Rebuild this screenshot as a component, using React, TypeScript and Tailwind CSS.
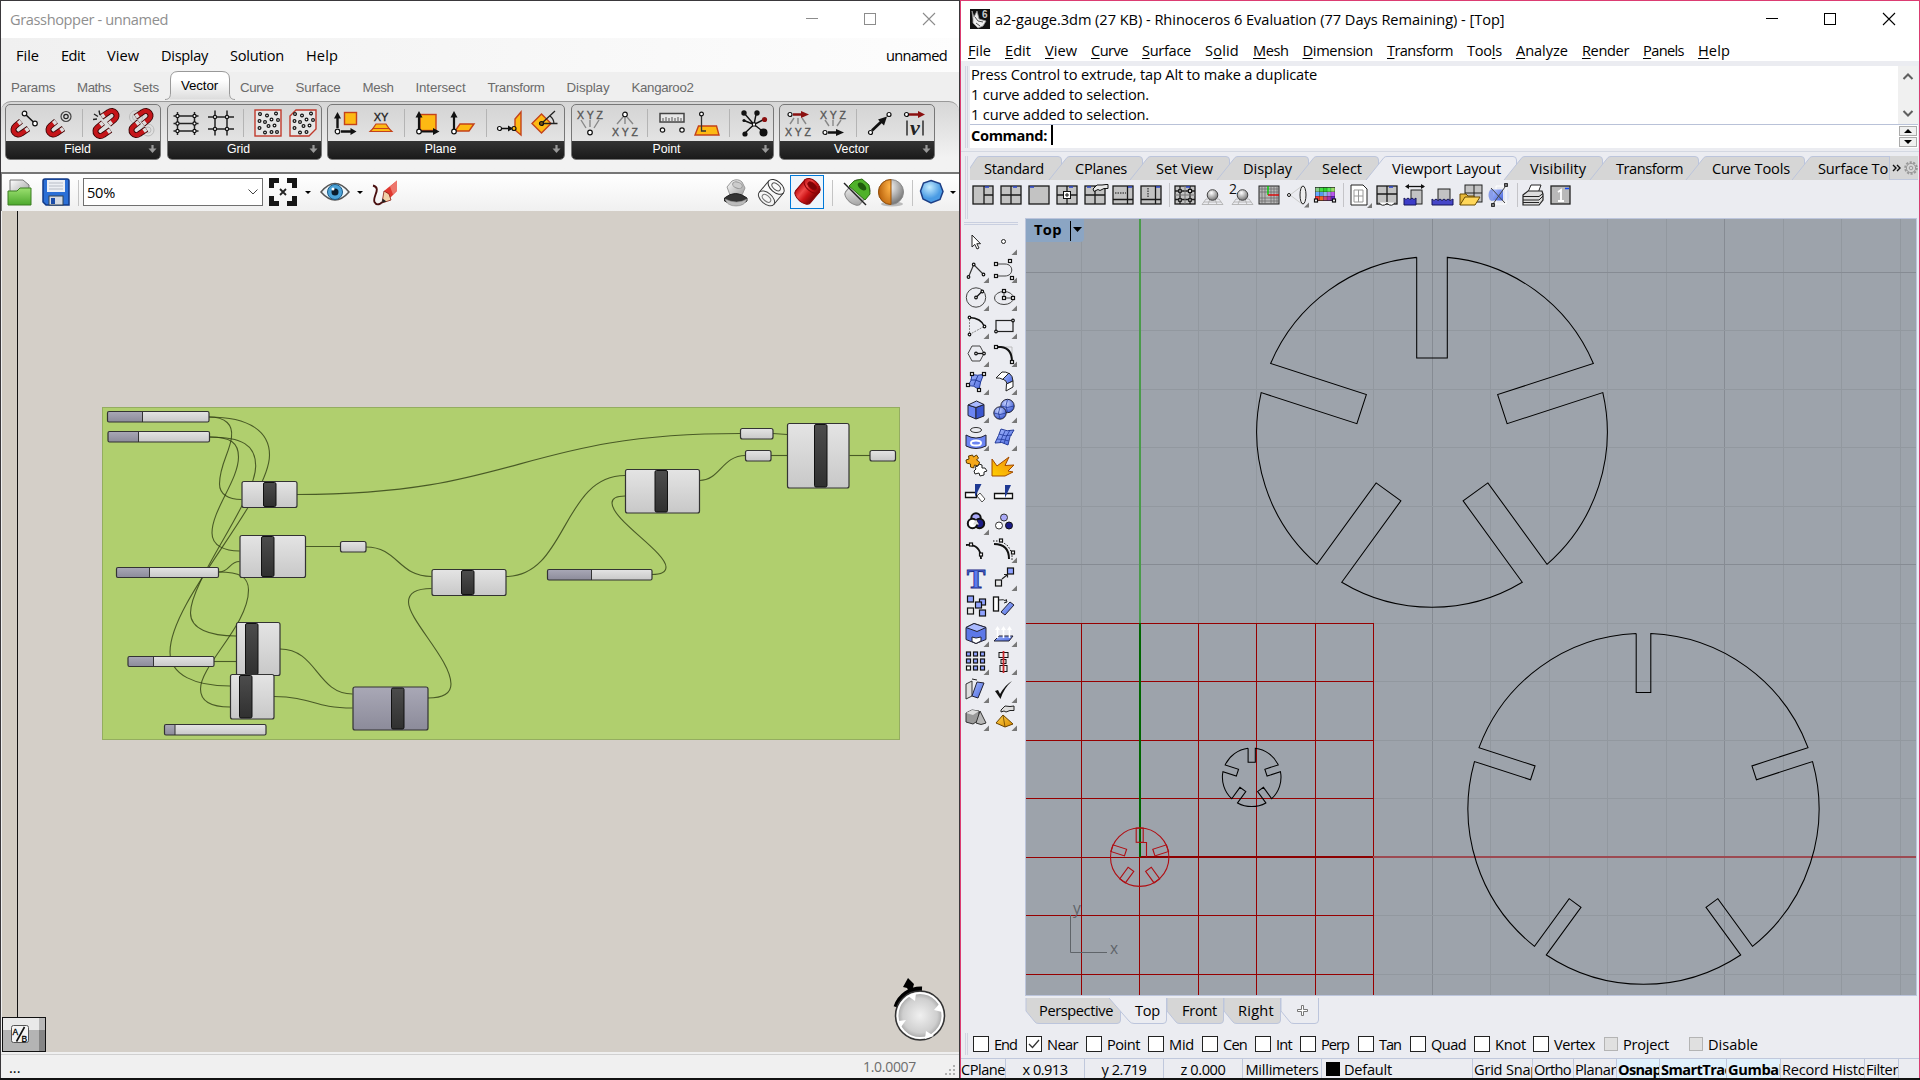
import React, { useLayoutEffect, useRef, useState } from "react";

/* Text run whose tracking is tuned so that it fills a given width. */
function T({ w, className = "", children }: { w?: number; className?: string; children: React.ReactNode }) {
  const ref = useRef<HTMLSpanElement>(null);
  const [ls, setLs] = useState(0);
  useLayoutEffect(() => {
    if (!w || !ref.current) return;
    const n = (ref.current.textContent || "").length;
    setLs((w - ref.current.getBoundingClientRect().width) / n);
  }, []);
  return (
    <span ref={ref} className={"inline-block whitespace-pre " + className} style={{ letterSpacing: ls }}>
      {children}
    </span>
  );
}

function Svg({ w, h, className = "", children }: { w: number; h: number; className?: string; children: React.ReactNode }) {
  return (
    <svg width={w} height={h} viewBox={`0 0 ${w} ${h}`} fill="none" className={"block shrink-0 overflow-visible " + className}>
      {children}
    </svg>
  );
}

const Defs = () => (
  <svg width="0" height="0" className="absolute">
    <defs>
      <linearGradient id="node" x1="0" y1="0" x2="0" y2="1"><stop offset="0" stopColor="#e4e4e4" /><stop offset="1" stopColor="#c8c8c8" /></linearGradient>
      <linearGradient id="bar" x1="0" y1="0" x2="0" y2="1"><stop offset="0" stopColor="#4c4c4c" /><stop offset="1" stopColor="#303030" /></linearGradient>
      <linearGradient id="sel" x1="0" y1="0" x2="0" y2="1"><stop offset="0" stopColor="#a9a8b6" /><stop offset="1" stopColor="#8c8b9a" /></linearGradient>
      <linearGradient id="red" x1="0" y1="0" x2="1" y2="0"><stop offset="0" stopColor="#c01214" /><stop offset=".3" stopColor="#f04a48" /><stop offset=".6" stopColor="#cc1416" /><stop offset="1" stopColor="#7c0406" /></linearGradient>
      <linearGradient id="blue" x1="0" y1="0" x2="1" y2="1"><stop offset="0" stopColor="#a9bcff" /><stop offset="1" stopColor="#4564dc" /></linearGradient>
      <linearGradient id="green" x1="0" y1="0" x2="0" y2="1"><stop offset="0" stopColor="#9be070" /><stop offset="1" stopColor="#4ca82c" /></linearGradient>
      <linearGradient id="gray" x1="0" y1="0" x2="1" y2="1"><stop offset="0" stopColor="#ffffff" /><stop offset="1" stopColor="#9a9a9a" /></linearGradient>
      <linearGradient id="gold" x1="0" y1="0" x2="1" y2="1"><stop offset="0" stopColor="#ffd24a" /><stop offset="1" stopColor="#d98a00" /></linearGradient>
      <linearGradient id="orange" x1="1" y1="0" x2="0" y2="1"><stop offset="0" stopColor="#f08a10" /><stop offset="1" stopColor="#ffd000" /></linearGradient>
      <radialGradient id="ball" cx=".4" cy=".3" r=".7"><stop offset="0" stopColor="#fff" /><stop offset="1" stopColor="#777" /></radialGradient>
      <radialGradient id="obail" cx=".9" cy=".3" r="1"><stop offset="0" stopColor="#ffb347" /><stop offset="1" stopColor="#b35a06" /></radialGradient>
      <radialGradient id="bball" cx=".4" cy=".3" r=".7"><stop offset="0" stopColor="#c9d5ff" /><stop offset="1" stopColor="#3c5ad2" /></radialGradient>
      <radialGradient id="dial"><stop offset="0" stopColor="#f0f0f0" /><stop offset=".7" stopColor="#cfcfcf" /><stop offset="1" stopColor="#9a9a9a" /></radialGradient>
      <radialGradient id="hex" cx=".4" cy=".3"><stop offset="0" stopColor="#c4ecff" /><stop offset="1" stopColor="#4a9be4" /></radialGradient>
    </defs>
  </svg>
);

/* ---------- Grasshopper ribbon icons (28 x 28) ---------- */

const Magnet = ({ t = "" }: { t?: string }) => (
  <g transform={t} strokeLinecap="butt">
    <path d="M12 10.300L6.300 15a4.800 4.800 0 0 0 6 7.500L19.500 17.500" stroke="#3a0808" strokeWidth="6" />
    <path d="M11.600 10.700L6.300 15a4.800 4.800 0 0 0 6 7.500L19 17.900" stroke="#c5161a" strokeWidth="4.200" />
    <path d="M11.900 10.400l-2.600 2.200M19.300 17.700l-2.700 2" stroke="#dcdcdc" strokeWidth="4" />
  </g>
);
const O = ({ x, y, r = 1.9, f = "#fff" }: { x: number; y: number; r?: number; f?: string }) => (
  <circle cx={x} cy={y} r={r} fill={f} stroke="#111" strokeWidth="1.2" />
);
const Letters = ({ x, y, c = "#555", s = 10.5, children }: { x: number; y: number; c?: string; s?: number; children: string }) => (
  <text x={x} y={y} fontSize={s} fontFamily="Liberation Sans, sans-serif" fill={c} stroke={c} strokeWidth=".35" textAnchor="middle">{children}</text>
);
const dots = [[6, 5], [13, 6.5], [22, 4.500], [17.500, 10.500], [24, 11], [5.500, 12], [11, 13], [20.500, 16.500], [14.500, 17], [5.500, 19], [23, 23], [11, 23.500], [17.500, 23]];

const gh: Record<string, React.ReactNode> = {
  m1: <><Magnet t="translate(-1 2)" /><path d="M14.500 4.500l10.500 10" stroke="#111" strokeWidth="1.500" /><O x={14.500} y={4.500} r={2.300} /><O x={25} y={14.500} r={2.300} /></>,
  m2: <><Magnet t="translate(-1 2)" /><circle cx="21" cy="7.500" r="5" stroke="#444" strokeWidth="1.200" /><circle cx="21" cy="7.500" r="2.200" stroke="#222" strokeWidth="1.200" /></>,
  m3: <><Magnet t="translate(-1 3.500)" /><Magnet t="rotate(180 14 14) translate(-1 2.500)" /><path d="M2 5l4 2.500M7 1.500l1 4.500M1 10.500l4-.5" stroke="#222" strokeWidth="1.400" /></>,
  m4: <><circle cx="9" cy="8" r="6.500" stroke="#bbb" /><circle cx="9" cy="8" r="3.500" stroke="#bbb" /><circle cx="21" cy="21" r="6" stroke="#bbb" /><circle cx="21" cy="21" r="3" stroke="#bbb" /><Magnet t="translate(0 2.500)" /><Magnet t="rotate(180 14 14) translate(0 2.500)" /></>,
  g1: <><path d="M1.500 7h25M1.500 14.500h25M1.500 22h25M5.500 3v23M22.500 3v23" stroke="#222" strokeWidth="1.500" />{[7, 14.500, 22].map((y) => <g key={y}><O x={5.500} y={y} r={1.600} /><O x={22.500} y={y} r={1.600} /></g>)}</>,
  g2: <><path d="M1 8h26M1 20h26M8 1.500v25M20 1.500v25" stroke="#222" strokeWidth="1.500" /><O x={8} y={8} r={1.600} /><O x={20} y={8} r={1.600} /><O x={8} y={20} r={1.600} /><O x={20} y={20} r={1.600} /></>,
  g3: <><rect x="1" y="1" width="26" height="26" fill="#e6e6e6" stroke="#c0392b" strokeWidth="1.400" />{dots.map(([x, y]) => <O key={x + "," + y} x={x} y={y} r={1.400} />)}</>,
  g4: <><path d="M7 1h20v19l-7 7H1V7z" fill="#e6e6e6" stroke="#c0392b" strokeWidth="1.400" />{dots.filter((d) => d[0] + d[1] < 46).map(([x, y]) => <O key={x + "," + y} x={x} y={y} r={1.400} />)}</>,
  p1: <><rect x="12.500" y="3.500" width="12" height="12" fill="#fdb913" stroke="#c4421a" strokeWidth="1.400" /><path d="M5.500 19V8M9 22.500h10" stroke="#111" strokeWidth="2.400" /><path d="M5.500 3l3.500 6.500h-7zM24.500 22.500l-6 3.500v-7z" fill="#111" /><O x={5.500} y={22.500} r={2.300} /></>,
  p2: <><Letters x={14} y={12} c="#222" s={11}>XY</Letters><path d="M9 15h10l3 4.500H6z" fill="#fdb913" stroke="#c4421a" strokeWidth="1.200" /><path d="M6 19.500h16l3 3H3z" fill="#fdb913" stroke="#c4421a" strokeWidth="1.200" /></>,
  p3: <><rect x="6" y="5.500" width="16" height="16" fill="#fdb913" stroke="#c4421a" strokeWidth="1.400" /><path d="M5 21V8M6 22.500h14" stroke="#111" strokeWidth="2.200" /><path d="M5 2l3.500 6.500h-7zM25.500 22.500l-6.500 3.500v-7z" fill="#111" /><O x={5} y={22.500} r={2.300} /></>,
  p4: <><path d="M11 15h14l-5 7H6z" fill="#fdb913" stroke="#c4421a" strokeWidth="1.400" /><path d="M5 21V8" stroke="#111" strokeWidth="2.200" /><path d="M5 2l3.500 6.500h-7z" fill="#111" /><O x={5} y={22.500} r={2.300} /></>,
  p5: <><path d="M19 10l6-7v23l-6-5z" fill="#fdb913" stroke="#c4421a" strokeWidth="1.400" /><path d="M5 19.500h8" stroke="#111" strokeWidth="1.600" /><path d="M17 19.500l-5 3v-6z" fill="#111" /><O x={3.500} y={19.500} r={2} /><O x={18} y={19.500} r={2} f="#fdb913" /></>,
  p6: <><path d="M10.500 5l9.500 9.500-9.500 9.500L1 14.500z" fill="#fdb913" stroke="#c4421a" strokeWidth="1.400" /><path d="M10.500 14.500L24 2M10.500 14.500h16M19 7q4 3 4 8" stroke="#222" strokeWidth="1.300" /><O x={10.500} y={14.500} r={2} f="#7a5510" /></>,
  q1: <><Letters x={14} y={9.500}>X Y Z</Letters><path d="M5 11l5 8M14 11v7M23 11l-5 8" stroke="#888" strokeWidth="1.400" /><O x={14} y={23.500} r={2.300} /></>,
  q2: <><O x={14} y={5.500} r={2.300} /><path d="M12 8l-6 7M14 9v6M16 8l6 7" stroke="#888" strokeWidth="1.400" /><Letters x={14} y={26.500}>X Y Z</Letters></>,
  q3: <><rect x="2" y="4.500" width="24" height="8.500" fill="#e8e8e8" stroke="#444" strokeWidth="1.500" /><path d="M5 12V9M8 12V8M11 12V9M14 12V8M17 12V9M20 12V8M23 12V9" stroke="#555" /><O x={4.500} y={21} r={2.200} /><O x={24} y={21} r={2.200} /></>,
  q4: <><path d="M5.500 17h18l2.500 9H2z" fill="#fdb913" stroke="#c4421a" strokeWidth="1.400" /><path d="M8.500 6v16h4.500" stroke="#333" strokeWidth="1.300" /><O x={8.500} y={5} r={1.900} /></>,
  q5: <><path d="M14 15.500L4 4M14 15.500L16.500 3M14 15.500L4 11.500M14 15.500l10-5M14 15.500L5 24M14 15.500l9 7" stroke="#111" strokeWidth="1.400" /><circle cx="4" cy="4" r="2.700" fill="#111" /><circle cx="17" cy="4" r="2.700" fill="#111" /><circle cx="4" cy="11.500" r="1.600" fill="#111" /><circle cx="24.500" cy="10.500" r="2.600" fill="#8b1010" /><circle cx="5" cy="25" r="2.600" fill="#111" /><circle cx="23.500" cy="23.500" r="4" fill="#111" /><rect x="12.500" y="14" width="3" height="3" fill="#fff" stroke="#111" /></>,
  v1: <><path d="M9 5.500h9" stroke="#8b1010" strokeWidth="2.600" /><path d="M25 5.500l-8 3.500V2z" fill="#8b1010" /><O x={6} y={5.500} r={2} /><path d="M10 9l-4 6M14 9v6M18 9l4 6" stroke="#888" strokeWidth="1.400" /><Letters x={14} y={26.500}>X Y Z</Letters></>,
  v2: <><Letters x={14} y={9.500}>X Y Z</Letters><path d="M6 11l4 6M14 11v6M22 11l-4 6" stroke="#888" strokeWidth="1.400" /><path d="M9 23.500h9" stroke="#111" strokeWidth="2.600" /><path d="M25 23.500l-8 3.500v-7z" fill="#111" /><O x={6} y={23.500} r={2} /></>,
  v3: <><path d="M6 21.500L16 12" stroke="#111" strokeWidth="2.800" /><path d="M21 7.500l-3 9-6-6z" fill="#111" /><O x={4.500} y={23.500} r={2} /><O x={23} y={5.500} r={2} /></>,
  v4: <><path d="M8 5.500h9" stroke="#8b1010" strokeWidth="2.600" /><path d="M24 5.500l-7 3.500V2z" fill="#8b1010" /><O x={5.500} y={5.500} r={2} /><path d="M6 11.500v15M22 11.500v15" stroke="#222" strokeWidth="1.400" /><text x="14" y="25.500" fontSize="22" fontWeight="bold" fontStyle="italic" textAnchor="middle" fontFamily="Liberation Serif, serif" fill="#222">v</text></>,
};

const ribbon: { name: string; w: string; icons: string[] }[] = [
  { name: "Field", w: "w-[156px]", icons: ["m1", "m2", "|", "m3", "m4"] },
  { name: "Grid", w: "w-[155px]", icons: ["g1", "g2", "|", "g3", "g4"] },
  { name: "Plane", w: "w-[238px]", icons: ["p1", "p2", "|", "p3", "p4", "|", "p5", "p6"] },
  { name: "Point", w: "w-[203px]", icons: ["q1", "q2", "|", "q3", "q4", "|", "q5"] },
  { name: "Vector", w: "w-[156px]", icons: ["v1", "v2", "|", "v3", "v4"] },
];

const ghMenu: [string, number][] = [["File", 23], ["Edit", 24], ["View", 32], ["Display", 47], ["Solution", 54], ["Help", 32]];
const ghTabs: [string, number][] = [["Params", 44], ["Maths", 34], ["Sets", 26], ["Vector", 37], ["Curve", 33.5], ["Surface", 45], ["Mesh", 31], ["Intersect", 50], ["Transform", 57], ["Display", 43], ["Kangaroo2", 62]];

const WinButtons = ({ color }: { color: string }) => (
  <div className="flex items-center">
    <Svg w={12} h={12}><path d="M0 5.500h12" stroke={color} /></Svg>
    <Svg w={12} h={12} className="ml-[46px]"><rect x=".5" y=".5" width="11" height="11" stroke={color} /></Svg>
    <Svg w={12} h={12} className="ml-[47px]"><path d="M0 0l12 12M12 0L0 12" stroke={color} strokeWidth="1.100" /></Svg>
  </div>
);

const Tri = ({ className = "" }: { className?: string }) => <Svg w={6} h={3} className={className}><path d="M0 0h6L3 3z" fill="#000" /></Svg>;

/* ---------- Grasshopper canvas data ---------- */

const sliders = [
  [107.500, 411.500, 101.500, 10.500, 142.500], [108, 431.500, 101.500, 10.500, 138.500], [116.500, 567.500, 102, 10, 149.500],
  [128, 656.500, 86, 10, 153.500], [164.500, 724.500, 101.500, 10.500, 175], [547.500, 569.500, 104.500, 10.500, 591.500],
];
const nodes: { r: number[]; bar?: number; sel?: boolean }[] = [
  { r: [242, 481.500, 55, 26], bar: 263.500 }, { r: [240, 535.500, 65.500, 42], bar: 261.500 }, { r: [340.500, 541.500, 25.500, 10.500] },
  { r: [432, 569.500, 74, 26], bar: 461.500 }, { r: [236.500, 622.500, 43.500, 53], bar: 245.500 }, { r: [230.500, 674.500, 43.500, 44.500], bar: 239.500 },
  { r: [353, 687, 75, 43], bar: 391.500, sel: true }, { r: [625.500, 469.500, 74, 43.500], bar: 655 }, { r: [787.500, 423.500, 61.500, 64.500], bar: 814.500 },
  { r: [740.500, 428.500, 32.500, 10.500] }, { r: [745.500, 450.500, 25.500, 10.500] }, { r: [870, 450.500, 25.500, 10.500] },
];
const wires = [
  "M209 417C226 417 233 425 231.500 437C230 452 219.500 465 219.500 484C219.500 494 228 499.500 241.500 499.500",
  "M209 417C250 417 269.500 432 269.500 455C269.500 500 170 600 170 652C170 675 195 686 230 686",
  "M209.500 437C242 437 255.700 445 255.700 466C255.700 500 190.500 580 190.500 613C190.500 629 210 636 236 636",
  "M209.500 437C231 437 238.500 443 238.500 457C238.500 480 212 510 212 533C212 546 225 551 239.500 551",
  "M218.500 572C230 572 229 561.500 239.500 561.500",
  "M218.500 572C240 572 248.500 577 248.500 590C248.500 625 200.500 665 200.500 689C200.500 702 212 707 230 707",
  "M214 661.500H236", "M297 494.500C520 494.500 520 433.500 740 433.500", "M773 433.500L787 434.500", "M771 455.500H787", "M849.500 455.500H870",
  "M699.500 480.500C720 480.500 722 455.500 745.500 455.500", "M506 576.500C567 576.500 562 475.500 625 475.500",
  "M652 574.500C662 574.500 666 572 666 567C666 552 612 520 612 503C612 498 617 496 625 496",
  "M305.500 546.500H340", "M366 547C398 547 398 576.500 431.500 576.500", "M280 649C317 649 317 694 352.500 694", "M274 696.500C313 697 313 708 352.500 708",
  "M428 698C443 698 451 694 451 684C451 660 408.500 620 408.500 602C408.500 593 417 588.500 431.500 588.500",
];

function GhCanvas() {
  return (
    <svg width="957" height="841" viewBox="2 211 957 841" fill="none" className="block">
      <rect x="2" y="211" width="15" height="841" fill="#d2ccc2" />
      <path d="M17.500 211V1017" stroke="#111" />
      <rect x="102.500" y="407.500" width="797" height="332" fill="#b0cf6e" stroke="#94ad60" />
      {wires.map((d) => <path key={d} d={d} stroke="#2f3d14" strokeOpacity=".8" strokeWidth="1.100" />)}
      {sliders.map(([x, y, w, h, s]) => (
        <g key={x}>
          <rect x={x} y={y} width={w} height={h} rx="1.500" fill="url(#node)" />
          <rect x={x} y={y} width={s - x} height={h} fill="url(#sel)" />
          <path d={`M${s} ${y}v${h}`} stroke="#333" />
          <rect x={x} y={y} width={w} height={h} rx="1.500" stroke="#333" strokeWidth="1.200" />
        </g>
      ))}
      {nodes.map(({ r: [x, y, w, h], bar, sel }) => (
        <g key={x + "," + y}>
          <rect x={x} y={y} width={w} height={h} rx="2" fill={sel ? "url(#sel)" : "url(#node)"} stroke="#333" strokeWidth="1.200" />
          {bar && <rect x={bar} y={y + 1} width="12.500" height={h - 2} rx="1.500" fill="url(#bar)" stroke="#111" />}
        </g>
      ))}
      <g>
        <rect x="2" y="1017" width="44" height="35" fill="#111" />
        <rect x="3" y="1018" width="36" height="12" fill="#e9e9e9" /><rect x="3" y="1030" width="36" height="21" fill="#b4b4b4" />
        <rect x="39" y="1018" width="6" height="12" fill="#b8b8b8" /><rect x="39" y="1030" width="6" height="21" fill="#858585" />
        <rect x="11.500" y="1025.500" width="17" height="17" rx="2" fill="#f4f4f4" stroke="#555" />
        <path d="M24.500 1027l-8 14.500" stroke="#111" strokeWidth="1.600" />
        <text x="12.500" y="1034.500" fontSize="8.500" fontFamily="Liberation Sans, sans-serif" fill="#000" stroke="#000" strokeWidth=".3">A</text>
        <text x="21.500" y="1041.500" fontSize="8.500" fontFamily="Liberation Sans, sans-serif" fill="#000" stroke="#000" strokeWidth=".3">B</text>
      </g>
      <g>
        <path d="M896 1007A26 26 0 0 1 922 989" stroke="#000" strokeWidth="5" />
        <path d="M908 978l6 6-2 7 3 0-4 4-4-7-4-1z" fill="#000" />
        <circle cx="920" cy="1015.500" r="24.500" fill="url(#dial)" stroke="#333" strokeWidth="1.500" />
        <circle cx="920" cy="1015.500" r="22.500" stroke="#fff" strokeWidth="2" />
        <path d="M908 996l8-3-1 8zM940 1003l2 9-8-2zM899 1021l7-1-5 7zM926 1031l8 5-9 3z" fill="#fff" />
      </g>
    </svg>
  );
}

const Cyl = ({ body, dark, stroke = "#555" }: { body: string; dark: string; stroke?: string }) => (
  <g transform="rotate(40 14 14)">
    <path d="M4.500 6v14.500a9.500 5 0 0 0 19 0V6z" fill={body} stroke={stroke} />
    <ellipse cx="14" cy="6" rx="9.500" ry="5.500" fill={body} stroke={stroke} />
    <ellipse cx="14" cy="6" rx="5" ry="2.700" fill={dark} stroke={stroke} />
  </g>
);

function Grasshopper() {
  return (
    <div className="flex h-[1078px] w-[960px] flex-col border-r border-l border-t border-[#3a383b] bg-[#efefef]">
      <div className="flex h-[37px] shrink-0 items-center justify-between bg-white pb-[1px] pl-[9px] pr-[24px]">
        <T w={158} className="text-[14.600px] text-[#8f8f8f]">Grasshopper - unnamed</T>
        <WinButtons color="#8c8c8c" />
      </div>
      <div className="flex h-[34px] shrink-0 items-center justify-between bg-gradient-to-r from-[#f0f0f0] to-[#fdfdfd] pl-[15px] pr-[12px]">
        <div className="flex gap-[22px]">{ghMenu.map(([t, w]) => <T key={t} w={w} className="text-[14.600px] text-black">{t}</T>)}</div>
        <T w={61} className="text-[14.600px]">unnamed</T>
      </div>
      <div className="relative z-10 flex h-[29px] shrink-0 items-center gap-[22px] pl-[10px] pt-[2px] font-['Liberation_Sans',Arial,sans-serif] text-[13.300px] text-[#6b6b6b]">
        {ghTabs.map(([t, w]) =>
          t === "Vector" ? (
            <div key={t} className="relative -mt-1 text-black">
              <svg width="70" height="30" viewBox="0 0 70 30" className="absolute -left-[16px] -top-[5px]">
                <defs><linearGradient id="tb" x1="0" y1="0" x2="0" y2="1"><stop offset=".3" stopColor="#fff" /><stop offset="1" stopColor="#dcdcdc" /></linearGradient></defs>
                <path d="M0 28.500C4 28.500 5.500 26 5.500 22V8Q5.500 .5 13 .5H57Q64.500 .5 64.500 8V22C64.500 26 66 28.500 70 28.500" fill="url(#tb)" stroke="#999" />
              </svg>
              <T w={w} className="relative">{t}</T>
            </div>
          ) : <T key={t} w={w}>{t}</T>,
        )}
      </div>
      <div className="flex h-[71px] shrink-0 gap-[5.500px] rounded-t-[10px] border-t border-[#999] bg-gradient-to-b from-[#d6d6d6] to-[#f2f2f2] to-80% pl-1 pt-[2px]">
        {ribbon.map((g) => (
          <div key={g.name} className={"flex h-[56px] flex-col overflow-hidden rounded-[5px] border border-[#777] bg-gradient-to-b from-[#d4d4d4] to-[#ebebeb] " + g.w}>
            <div className="flex h-[37px] items-center">
              {g.icons.map((k, i) =>
                k === "|" ? <div key={i} className="flex w-[12px] justify-center"><div className="h-[28px] w-px bg-[#b4b4b4]" /></div>
                  : <div key={i} className="flex w-[35px] justify-center pl-[1px]"><Svg w={28} h={28}>{gh[k]}</Svg></div>,
              )}
            </div>
            <div className="relative flex h-[18px] items-center justify-center bg-gradient-to-b from-[#343434] to-[#1a1a1a] pb-[2px] pr-[11px] font-['Liberation_Sans',Arial,sans-serif] text-[12.300px] text-white">
              {g.name}
              <Svg w={9} h={9} className="absolute right-[3px] top-[4px]"><path d="M4.500 0v4" stroke="#999" strokeWidth="2.200" /><path d="M.5 3.500h8l-4 4.500z" fill="#999" /></Svg>
            </div>
          </div>
        ))}
      </div>
      <div className="flex h-[39px] shrink-0 items-center border-l border-t-2 border-[#777] bg-gradient-to-b from-white to-[#f0f0f0] pl-[5px]">
        <Svg w={26} h={28} className="-mt-[2px]">
          <path d="M3 2h13l6 5v12H3z" fill="url(#gray)" stroke="#777" />
          <path d="M1 13h9l3-3h11v17H1z" fill="url(#green)" stroke="#3a7d20" />
        </Svg>
        <Svg w={28} h={28} className="-mt-[2px] ml-[9px]">
          <path d="M1 3q0-2 2-2h22q2 0 2 2v24H4l-3-3z" fill="#2b6fd6" stroke="#123a86" strokeWidth="1.500" />
          <rect x="5" y="2" width="18" height="12" fill="#eceff4" /><path d="M7 5h14M7 8h14M7 11h14" stroke="#b8bdc6" />
          <rect x="7" y="18" width="14" height="9" fill="#d5dae2" stroke="#345" /><rect x="9" y="20" width="4" height="6" fill="#1a4ca8" />
        </Svg>
        <div className="ml-[8px] h-[26px] w-px bg-[#c4c4c4]" />
        <div className="-mt-[2px] ml-[4px] flex h-[28px] w-[180px] items-center justify-between border border-[#707070] bg-white pl-[3px] pr-[4px]">
          <T w={28} className="text-[14.600px] text-black">50%</T>
          <Svg w={10} h={6}><path d="M.5 .5l4.500 4.500L9.500 .5" stroke="#444" /></Svg>
        </div>
        <Svg w={28} h={28} className="-mt-[2px] ml-[6px]">
          <path d="M2.500 10V2.500H10M18 2.500h7.500V10M2.500 18v7.500H10M18 25.500h7.500V18" stroke="#161616" strokeWidth="5" />
          <path d="M11 11l6 6M17 11l-6 6" stroke="#222" strokeWidth="1.800" />
        </Svg>
        <Tri className="-mt-[1px] ml-[8px]" />
        <Svg w={28} h={20} className="-mt-[2px] ml-[10px]">
          <path d="M0 10Q14-7 28 10Q14 26 0 10z" fill="#eef6fa" stroke="#555" strokeWidth="1.500" /><circle cx="14" cy="10" r="7.500" fill="#4ba3d9" stroke="#1d5a86" /><circle cx="14" cy="10" r="3.500" fill="#0a1c2c" /><circle cx="12" cy="7" r="1.500" fill="#fff" />
        </Svg>
        <Tri className="-mt-[1px] ml-[8px]" />
        <Svg w={28} h={28} className="ml-[9px]">
          <path d="M25 1.500L12 12l5 8 8-8z" fill="#e0382f" /><path d="M25 1.500l0 10-4 4-3-8z" fill="#f0867c" opacity=".8" /><path d="M12 12l-2 12 9-3-2-6z" fill="#f2d2a8" stroke="#8a1a10" strokeWidth=".8" /><path d="M10.500 19.500l-.5 4.500 4.500-1.500z" fill="#222" />
          <path d="M1 6.500C10 9 0 18 2.500 23C5 27.500 9 24.500 10 23" stroke="#4a1010" strokeWidth="1.900" />
        </Svg>
        <Svg w={28} h={28} className="ml-[322px]">
          <g transform="translate(0 -1)"><path d="M5 9l5-6q6-3 10 1l3 6-3 7q-6 4-12 0z" fill="url(#gray)" stroke="#999" /><ellipse cx="15.500" cy="7" rx="5" ry="3" fill="#ccc" stroke="#999" transform="rotate(20 15 7)" /><path d="M2.500 20q11-9 22.500 0v3q-10 8-22.500 0z" fill="#333" stroke="#222" /><path d="M3 21q2 7 11 7t11-7q-10 6-22 0z" fill="#bbb" stroke="#888" strokeWidth=".6" /></g>
        </Svg>
        <Svg w={28} h={28} className="ml-[7px]"><g transform="rotate(40 14 14)"><path d="M4.500 6v15M23.500 6v15" stroke="#333" /><ellipse cx="14" cy="6" rx="9.500" ry="5.500" stroke="#333" /><ellipse cx="14" cy="6" rx="5" ry="2.800" stroke="#555" /><ellipse cx="14" cy="21" rx="9.500" ry="5.500" stroke="#444" /><ellipse cx="14" cy="21" rx="5" ry="2.800" stroke="#777" /></g></Svg>
        <div className="-mt-[1px] ml-[5px] flex h-[34px] w-[34px] items-center justify-center border border-[#0078d7] bg-[#eef5fb]"><Svg w={28} h={28}><Cyl body="url(#red)" dark="#7c0506" stroke="#8c0406" /></Svg></div>
        <div className="ml-[8px] h-[26px] w-px bg-[#c4c4c4]" />
        <Svg w={28} h={28} className="ml-[10px]"><Cyl body="url(#gray)" dark="#999" stroke="#888" /><path d="M6 7l5-5 8-2 7 6 1 9-5 6z" fill="#4fb22a" stroke="#2c7010" /><ellipse cx="19" cy="7.500" rx="5" ry="3" fill="#1f5a0c" transform="rotate(40 19 7.500)" /><path d="M1 4l22 22" stroke="#222" strokeWidth="1.500" /></Svg>
        <Svg w={28} h={28} className="ml-[6px]"><ellipse cx="15" cy="25" rx="11" ry="2.500" fill="#bbb" /><circle cx="14" cy="13" r="12.500" fill="url(#ball)" stroke="#888" /><path d="M14 .5a12.500 12.500 0 0 0 0 25z" fill="url(#obail)" stroke="#9a5208" /></Svg>
        <div className="ml-[7px] h-[26px] w-px bg-[#c4c4c4]" />
        <Svg w={26} h={26} className="-mt-[1px] ml-[6px]"><path d="M12 1.500l9 3 3 8-3 8-9 3.500-8-4-2.500-8L4.500 4z" fill="url(#hex)" stroke="#1d3f86" strokeWidth="1.500" /></Svg>
        <Tri className="-mt-[1px] ml-[5px]" />
      </div>
      <div className="ml-px h-[841px] shrink-0 bg-[#d4cfc8]"><GhCanvas /></div>
      <div className="mt-[2px] flex min-h-0 flex-1 items-center justify-between border-t border-[#d0d0d0] bg-[#f0f0f0] pl-[8px] pr-[3px]">
        <span className="text-[14.600px] text-black">...</span>
        <div className="flex items-end">
          <T w={53} className="text-[14px] text-[#6d6d6d]">1.0.0007</T>
          <Svg w={12} h={12} className="ml-[28px]"><path d="M9 1h2M9 5h2M5 5h2M9 9h2M5 9h2M1 9h2" stroke="#b0b0b0" strokeWidth="2" /></Svg>
        </div>
      </div>
    </div>
  );
}

/* ---------- Rhino ---------- */

const rhMenu: [string, number, number][] = [
  ["File", 0, 23], ["Edit", 0, 26], ["View", 0, 32], ["Curve", 0, 37], ["Surface", 0, 49], ["Solid", 1, 34], ["Mesh", 0, 35.500], ["Dimension", 0, 70.500],
  ["Transform", 0, 66], ["Tools", 3, 35], ["Analyze", 0, 52], ["Render", 0, 47], ["Panels", 0, 41], ["Help", 0, 32],
];
const rhTabs: [string, number, number][] = [
  ["Standard", 92, 60], ["CPlanes", 95, 52], ["Set View", 101, 57], ["Display", 93, 49], ["Select", 84, 40], ["Viewport Layout", 152, 109],
  ["Visibility", 100, 56], ["Transform", 110, 67], ["Curve Tools", 120, 78], ["Surface To", 98, 70],
];

const VP = ({ d = "", m = 11 }: { d?: string; m?: number }) => (
  <><rect x="1" y="2" width="20" height="18" fill="#c3c3c3" stroke="#1a1a1a" strokeWidth="1.300" /><path d={d} stroke="#1a1a1a" strokeWidth="1.300" /><path d={`M${m} 3h4`} stroke="#2743c8" strokeWidth="1.500" /></>
);
const Sq = ({ x, y, s = 3 }: { x: number; y: number; s?: number }) => <rect x={x - s / 2} y={y - s / 2} width={s} height={s} fill="#fff" stroke="#111" strokeWidth="1.200" />;
const Sphere = () => <><path d="M4 15h13l4 5.500H0zM2 18h17M8 15l-2 5.500M13 15l2 5.500" stroke="#aaa" strokeWidth=".8" /><circle cx="10.500" cy="11" r="5.300" fill="url(#ball)" stroke="#444" /></>;
const swatches = ["#8c8", "#4d4", "#2bd42b", "#5e5", "#9d6", "#6af", "#59e", "#8be", "#a8e", "#b5e", "#f33", "#e62", "#c47", "#a3a", "#62c"];

const rhBar: React.ReactNode[] = [
  <VP d="M12 2v18M12 11h9" m={13} />, <VP d="M11 2v18M1 11h20" m={13} />, <VP m={2} />,
  <><VP d="M11 2v18M1 11h20" m={13} /><rect x="7.500" y="7.500" width="7" height="7" fill="#fff" stroke="#111" /><path d="M11 9v4M9 11h4" stroke="#111" /></>,
  <><VP d="M11 2v18M1 11h20" m={3} /><path d="M9 5l4-4h5l4-.5h2v4h-4l-4 2-2-1-4 2z" fill="#e8e8e8" stroke="#111" /></>,
  <><VP d="M15.500 2v18M1 15.500h20" m={16} /><path d="M3 9h11" stroke="#111" strokeDasharray="1.500 1" /></>,
  <><VP d="M15.500 2v18M1 15.500h20" m={16} /><path d="M8 4v10" stroke="#111" strokeDasharray="1.500 1" /></>,
  "|",
  <><VP d="M6 2v18M16 2v18M1 7h20M1 15.500h20" m={12} /><path d="M11 2v18M1 11h20" stroke="#777" /><Sq x={6} y={7} s={2.500} /><Sq x={16} y={7} /><Sq x={6} y={16} s={2.500} /><Sq x={16} y={16} s={2.500} /></>,
  <Sphere />,
  <><g transform="translate(2 0)"><Sphere /></g><text x="-1" y="10" fontSize="14" fontFamily="Open Sans, sans-serif" fill="#111">2</text></>,
  <><rect x="1" y="2" width="20" height="18" fill="#b9b9b9" stroke="#222" /><path d="M4 2v18M7 2v18M13 2v18M16 2v18M19 2v18M1 5h20M1 8h20M1 14h20M1 17h20" stroke="#666" strokeWidth=".7" /><path d="M10 2v9" stroke="#0c0" strokeWidth="1.400" /><path d="M10 11h11" stroke="#d00" strokeWidth="1.400" /></>,
  <><path d="M4 11L16 2M4 11l12 9" stroke="#ccc" /><circle cx="3" cy="11" r="1.500" fill="#fff" stroke="#111" /><ellipse cx="17" cy="11" rx="3" ry="9" fill="#eee" stroke="#222" /><path d="M23 18.500v5h-5z" fill="#777" /></>,
  <><rect x="1" y="3" width="20" height="14" fill="#222" />{swatches.map((c, i) => <rect key={i} x={1.500 + (i % 5) * 3.900} y={3.700 + Math.floor(i / 5) * 4.300} width="3.600" height="4" fill={c} />)}<Sq x={2} y={16.500} /><Sq x={20} y={16.500} /></>,
  "|",
  <><path d="M3 1h12l4 4v16H3z" fill="#fff" stroke="#222" /><path d="M6 6h9v12H6zM10.500 6v12M6 12h9" stroke="#999" /><path d="M24 19v5h-5z" fill="#777" /></>,
  <><VP d="M11 2v16M1 10h20" m={13} /><path d="M3 18.500q3 5 8 1q5 4 8-1" fill="#fff" stroke="#222" /></>,
  <><rect x="7" y="6" width="11" height="14" fill="#c3c3c3" stroke="#222" /><path d="M3 2.500h17" stroke="#111" strokeWidth="1.300" /><path d="M1 2.500l4-2.500v5zM21 2.500l-4-2.500v5z" fill="#111" /><path d="M0 14q2 3 4 0q2 3 4 0q2 3 4 0v7H0z" fill="#3c3cc8" stroke="#14145a" /></>,
  <><rect x="6" y="5" width="12" height="12" fill="#c3c3c3" stroke="#222" /><path d="M0 15q2 3 4 0q2 3 4 0q2 3 4 0q2 3 4 0q2 3 5 0v6H0z" fill="#4646c8" stroke="#14145a" /></>,
  <><rect x="5" y="1" width="17" height="17" fill="#c3c3c3" stroke="#222" /><path d="M14 1v17M5 9h17" stroke="#222" /><path d="M0 21V10h6l2 2h6v2" fill="#e8b838" stroke="#6a4a00" /><path d="M0 21l5-8h15l-5 8z" fill="#ffd75a" stroke="#6a4a00" /></>,
  <><ellipse cx="4" cy="11" rx="3.500" ry="6" fill="#5f7ce6" opacity=".7" /><ellipse cx="18" cy="11" rx="3.500" ry="6" fill="#dfe4f4" /><path d="M8 2h10v18H8z" stroke="#fff" /><rect x="5" y="5.500" width="10" height="11" fill="url(#blue)" /><path d="M5 20L17 3M3 4l14 15" stroke="#444" /><Sq x={18} y={1} s={2.500} /><Sq x={5} y={21} s={2.500} /></>,
  "|",
  <><path d="M6 8l3-7h10l-3 8z" fill="#fff" stroke="#222" /><path d="M1 11l5-4h14l1 3v6l-4 5H1z" fill="#ddd" stroke="#222" strokeWidth="1.200" /><path d="M1 12.500h16l4-3M1 16h16l4-4M1 18.500h16" stroke="#222" /></>,
  <><rect x="1" y="2" width="19" height="18" fill="#b9b9b9" stroke="#222" strokeWidth="1.300" /><path d="M8 8l3-2v11M8 17h6" stroke="#fff" strokeWidth="1.800" /><path d="M15 4.500h4" stroke="#1245f0" strokeWidth="1.500" /></>,
];

const TriC = () => <path d="M27 22.500v5.500h-5.500z" fill="#777" />;
const Box = ({ x, y, w = 6, f = "#8fa2ff" }: { x: number; y: number; w?: number; f?: string }) => <rect x={x} y={y} width={w} height={w} fill={f} stroke="#111" strokeWidth="1.200" />;

const tools: React.ReactNode[] = [
  <path d="M10 8v12l2.800-2.600L15 22l2-1-2.200-4.300H18.500z" fill="#fff" stroke="#222" />,
  <><circle cx="13.500" cy="14.500" r="2" fill="#fff" stroke="#222" /><TriC /></>,
  <><path d="M6.500 22L11.700 9.500 21.500 19.500" stroke="#333" strokeWidth="1.200" /><O x={6.500} y={22} r={1.300} /><O x={11.700} y={9.500} r={1.300} /><O x={21.500} y={19.500} r={1.300} /><TriC /></>,
  <><path d="M6 9h9c9 0 9 12 0 12H6" stroke="#444" /><Sq x={6} y={9} /><Sq x={20} y={6} /><Sq x={6} y={21} /><TriC /><Sq x={22} y={23} /></>,
  <><circle cx="14" cy="14.500" r="9.700" stroke="#444" /><path d="M14 14.500l6-6" stroke="#111" strokeWidth="1.300" /><O x={14} y={14.500} r={1.300} /><O x={20.300} y={8.500} r={1.300} /><TriC /></>,
  <><ellipse cx="14" cy="15" rx="9.500" ry="6.500" stroke="#444" /><path d="M14 8v7h9" stroke="#444" /><Sq x={14} y={8} /><Sq x={14} y={15} /><Sq x={23} y={15} /><TriC /></>,
  <><path d="M22 15.500L7.500 23.500V6.500" stroke="#888" strokeDasharray="2 1" /><path d="M7.500 6.500Q19 7 22.500 15.500" stroke="#111" strokeWidth="1.400" /><O x={7.500} y={6.500} r={1.300} /><O x={7.500} y={23.500} r={1.300} /><O x={22.500} y={15.500} r={1.300} /><TriC /></>,
  <><rect x="6" y="9.500" width="17" height="11" stroke="#222" strokeWidth="1.200" /><O x={6} y={20.500} r={1.300} /><O x={23} y={9.500} r={1.300} /><TriC /></>,
  <><path d="M6 14.500l4-7.500h8l4 7.500-4 7.500h-8z" stroke="#444" /><path d="M14 14.500h8" stroke="#111" strokeWidth="1.300" /><O x={14} y={14.500} r={1.300} /><O x={22} y={14.500} r={1.300} /><TriC /></>,
  <><path d="M6 8h16v15" stroke="#bbb" /><path d="M6 8h5q11 1 11 15" stroke="#111" strokeWidth="2" /><Sq x={6} y={8} /><TriC /><Sq x={22} y={23} /></>,
  <><path d="M10 7.500Q15 9 21.500 7.500Q18 15 17 22.500Q12 18 6 18.500Q10 14 10 7.500z" fill="url(#blue)" stroke="#223a9a" /><path d="M16 8.500q-3 6-4 10M8.500 13q5-1 10 2" stroke="#223a9a" /><Sq x={10} y={7} /><Sq x={22} y={7} /><Sq x={17} y={23} /><Sq x={6} y={18} /><TriC /></>,
  <><path d="M6 11l6-6q4-.5 7 1.500l-6 6q-3-2-7-1.500z" fill="#fff" stroke="#222" /><path d="M13 12l6-6q4 3 4 8l-6 3q0-3-4-5z" fill="url(#blue)" stroke="#222" /><path d="M16.500 17l6.500-3v6l-7 4z" fill="#fff" stroke="#222" /><TriC /></>,
  <><path d="M6 10l8 2.500V24l-8-3.500z" fill="#6c85f2" stroke="#223" /><path d="M14 12.500l8-3v11.500L14 24z" fill="#3b57d0" stroke="#223" /><path d="M6 10l8.500-4L22 9.500l-8 3z" fill="#a9b9ff" stroke="#223" /><TriC /></>,
  <><circle cx="17.500" cy="11" r="6.700" fill="url(#bball)" stroke="#223" /><circle cx="10" cy="18" r="6.200" fill="url(#bball)" stroke="#223" /><path d="M4 18q6 3 12 0M10 12q-3 6 0 12M11 11q6 3 13 0M17.500 4.500q-3 6 0 13" stroke="#223a9a" strokeWidth=".8" /><TriC /></>,
  <><ellipse cx="14" cy="7" rx="5.500" ry="2.500" stroke="#333" /><path d="M4 12q10 6 20 0v11q-10 5-20 0z" fill="#6c85f2" stroke="#223" /><ellipse cx="14" cy="20" rx="5" ry="2.500" stroke="#fff" strokeWidth="2" /><TriC /></>,
  <><path d="M11 6q6 3 13 1q-5 6-6 15q-6-4-13-2q4-8 6-14z" fill="url(#blue)" stroke="#223a9a" /><path d="M15 8q-3 6-5 12M19.500 8q-4 6-5.500 12.500M9 11q6 3 13 1M7 16q6 0 12 2" stroke="#223a9a" strokeWidth=".8" /><TriC /></>,
  <><path d="M4 9l3-1-.5-3 4-1 1 2 3-2 2 3-2 2 3 2-1 4-4-1-1 3-3-1 0-3-4-1z" fill="#f5a81c" stroke="#5a3a00" /><path d="M13 16l3-1 1-2 3 1 0 3 3 0 2 3-3 1 0 3-4 1-1-3-4 1-1-3 2-2z" fill="#fff" stroke="#222" /></>,
  <><path d="M2 25V8l5 7L19 6l-4 8.500 9-.5-6 6 5 1-8 4z" fill="url(#orange)" stroke="#a04a00" /></>,
  <><path d="M3.500 13.500h11v5h-11z" fill="#fff" stroke="#111" strokeWidth="1.300" /><path d="M13 5h6.500l-6.500 13z" fill="#1f3a93" /><path d="M15 17l3-3 5 6-3 3z" fill="#fff" stroke="#555" /></>,
  <><path d="M4.500 14.500h18v5h-18z" fill="#fff" stroke="#111" strokeWidth="1.300" /><path d="M15 6h6l-6 13z" fill="#1f3a93" /></>,
  <><circle cx="14" cy="11" r="4.700" stroke="#111" strokeWidth="2" fill="#a9a9f8" /><circle cx="17.500" cy="16.500" r="4.700" stroke="#111" strokeWidth="2" fill="#1c1c86" /><circle cx="10.500" cy="16.500" r="4.700" stroke="#111" strokeWidth="2" fill="#fff" /><path d="M14 12.500l3 5h-6z" fill="#ddd" /><TriC /></>,
  <><circle cx="14" cy="10.500" r="3.500" fill="#a9a9f8" stroke="#333" /><circle cx="9" cy="18.500" r="3.500" fill="#fff" stroke="#333" /><circle cx="19" cy="18.500" r="3.500" fill="#1c1c86" stroke="#111" /></>,
  <><path d="M4 10q15-1 15 14" stroke="#111" strokeWidth="1.800" /><Sq x={9} y={9.500} /><Sq x={19} y={19.500} /></>,
  <><path d="M4 9q15 0 15 15" stroke="#111" strokeWidth="2" /><path d="M3 6h8l7 5 4 7v7" stroke="#111" strokeDasharray="1.500 1.500" /><Sq x={11} y={5.500} /><Sq x={23} y={17.500} /><TriC /></>,
  <text x="14" y="25" fontSize="28" fontFamily="Liberation Serif, serif" fontWeight="bold" fill="#5b7bee" stroke="#1c2f8a" strokeWidth=".9" textAnchor="middle">T</text>,
  <><Box x={17.500} y={5} /><Box x={5.500} y={17} f="#e8e8e8" /><path d="M12 16l5-4M14 11.500h3.500v3" stroke="#222" strokeWidth="1.200" /><TriC /></>,
  <><Box x={5.500} y={5} /><Box x={17.500} y={8} /><Box x={13.500} y={11} /><Box x={5.500} y={17} f="#e8e8e8" /><Box x={17.500} y={19} /></>,
  <><rect x="3.500" y="6" width="5" height="14" fill="#fff" stroke="#111" strokeWidth="1.300" /><path d="M9 9q5-1 7 1M14 12l3-1-1-3" stroke="#222" /><path d="M11 21l9-10 4 3-9 10z" fill="url(#blue)" stroke="#223" /></>,
  <><path d="M4 8.500l8-4 12 4v12l-10 4-10-4z" fill="#5d78e8" stroke="#223" /><path d="M4 8.500l8-4 12 4-9 4z" fill="#a9b9ff" stroke="#223" /><path d="M10 18l4 1 5-1v4l-5 2.500-4-2z" fill="#fff" stroke="#223" /><TriC /></>,
  <><path d="M4 22l5-5h14l-4 5z" fill="url(#blue)" stroke="#223" /><path d="M7.500 19V9M13.500 19V9M19.500 19V9" stroke="#fff" strokeWidth="1.600" /><path d="M5 11l2.500-4 2.500 4zM11 11l2.500-4 2.500 4zM17 11l2.500-4 2.500 4z" fill="#fff" /><TriC /></>,
  <>{[5, 12, 19].map((y) => [4.500, 11.500, 18.500].map((x) => <Box key={x + "," + y} x={x} y={y} w={4} f={x < 5 && y > 18 ? "#fff" : "#8fa2ff"} />))}<TriC /></>,
  <><rect x="9" y="5.500" width="9" height="5" fill="#eee" stroke="#111" /><rect x="11" y="12.500" width="5" height="4" fill="#eee" stroke="#111" /><rect x="10" y="18.500" width="7" height="6" fill="#eee" stroke="#111" /><path d="M13.500 4v22" stroke="#c8282c" strokeWidth="1.800" /><TriC /></>,
  <><path d="M4 9l6-3v15l-6 3z" fill="#ddd" stroke="#333" /><path d="M10 21l5-14 7 1-6 15z" fill="url(#blue)" stroke="#223" /><path d="M10 4l5 1" stroke="#222" /><TriC /></>,
  <><path d="M5 16l3-1 2 4q5-9 12-13Q14 13 10.500 24z" fill="#111" /><TriC /></>,
  <><path d="M4 10l6-3 7 1v9l-6 4-7-2z" fill="#999" stroke="#333" /><path d="M4 10l6-3 7 1-6 4z" fill="#ddd" /><path d="M18 8l6 12q-5 3-10 0z" fill="#b8b8b8" stroke="#333" /><TriC /></>,
  <><path d="M13 12l10 9-8 3-9-4z" fill="url(#gold)" stroke="#6a4200" /><path d="M13 12l2 12" stroke="#6a4200" strokeWidth=".8" /><path d="M11 7l4-4 5 .5 4-.5v4.500h-4l-4 1.500-2-1-3 1z" fill="#ddd" stroke="#222" /><TriC /></>,
];

/* Notched disc: five radial slots cut from a circle. */
function disc(cx: number, cy: number, r: number, hw: number, inner: number) {
  const pt = (a: number, x: number, y: number) => {
    const c = Math.cos(a), s = Math.sin(a);
    return `${(cx + x * c - y * s).toFixed(2)} ${(cy + x * s + y * c).toFixed(2)}`;
  };
  const edge = Math.sqrt(r * r - hw * hw);
  let d = "";
  for (let i = 0; i < 5; i++) {
    const a = (i * 2 * Math.PI) / 5;
    d += `${i ? `A${r} ${r} 0 0 1 ` : "M"}${pt(a, -hw, -edge)}L${pt(a, -hw, -inner)}L${pt(a, hw, -inner)}L${pt(a, hw, -edge)}`;
  }
  return d + `A${r} ${r} 0 0 1 ${pt(0, -hw, -edge)}`;
}

function Viewport() {
  const P = 58.5;
  const xs = Array.from({ length: 15 }, (_, i) => ({ x: 1139.8 + (i - 1) * P, major: (i - 1) % 5 === 0 }));
  const ys = Array.from({ length: 13 }, (_, i) => ({ y: 857 + (i - 10) * P, major: (i - 10) % 5 === 0 }));
  const snap = (v: number) => Math.floor(v) + 0.5;
  return (
    <svg width="890" height="776" viewBox="1026 219 890 776" fill="none" className="block">
      <rect x="1026" y="219" width="891" height="776" fill="#9da3ab" />
      {xs.map(({ x, major }) => <path key={x} d={`M${snap(x)} 219V995`} stroke={major ? "#868b93" : "#92989f"} />)}
      {ys.map(({ y, major }) => <path key={y} d={`M1026 ${snap(y)}H1917`} stroke={major ? "#868b93" : "#92989f"} />)}
      {xs.filter(({ x }) => x < 1380).map(({ x }) => <path key={x} d={`M${snap(x)} 623V995`} stroke="#960000" />)}
      {ys.filter(({ y }) => y > 620).map(({ y }) => <path key={y} d={`M1026 ${snap(y)}H1374`} stroke="#960000" />)}
      <path d="M1373 857H1917" stroke="#9c4a52" strokeWidth="2" />
      <path d="M1140 857H1373" stroke="#8c0000" strokeWidth="2" />
      <path d="M1140 219V623" stroke="#4a9a4a" strokeWidth="2" />
      <path d="M1140 623V857" stroke="#006400" strokeWidth="2" />
      <g stroke="#000" strokeWidth="1.050">
        <path d={disc(1432, 432, 175.300, 15.300, 74)} />
        <path d={disc(1643.500, 808.800, 175.500, 7.300, 116.400)} />
        <path d={disc(1251.700, 777.300, 29.300, 3.600, 15)} />
      </g>
      <g stroke="#b00d12" strokeWidth="1.100">
        <circle cx="1139.700" cy="857.200" r="29.200" />
        {[0, 72, 144, 216, 288].map((a) => <rect key={a} x="1136.200" y="828" width="7" height="14.300" transform={`rotate(${a} 1139.700 857.200)`} />)}
        <path d="M1140 842.500h6.500V857" />
      </g>
      <path d="M1070.500 915V952.500H1107" stroke="#5f6469" />
      <g fontFamily="Open Sans, sans-serif" fontSize="15.500" fill="#5f6469"><text x="1073" y="914">y</text><text x="1110" y="953.500">x</text></g>
    </svg>
  );
}

const osnaps: [string, number, number][] = [
  ["End", 53, 23], ["Near", 60, 31], ["Point", 62, 33], ["Mid", 54, 25], ["Cen", 53, 24], ["Int", 45, 16], ["Perp", 58, 28], ["Tan", 52, 22],
  ["Quad", 64, 35], ["Knot", 59, 31], ["Vertex", 71, 41], ["Project", 85, 46], ["Disable", 75, 50],
];

const status: { t: string; c: string; b?: boolean; w?: number }[] = [
  { t: "CPlane", c: "w-[45px]", w: 44 }, { t: "x 0.913", c: "w-[79px] justify-center", w: 45 }, { t: "y 2.719", c: "w-[79px] justify-center", w: 45 },
  { t: "z 0.000", c: "w-[79px] justify-center", w: 45 }, { t: "Millimeters", c: "w-[79px] justify-center", w: 73 }, { t: "Default", c: "w-[151px] pl-[4px]", w: 48 },
  { t: "Grid Snap", c: "w-[60px] pl-[1px]", w: 65 }, { t: "Ortho", c: "w-[41px] pl-[1px]", w: 37 }, { t: "Planar", c: "w-[43px] pl-[1px]", w: 41 },
  { t: "Osnap", c: "w-[43px] pl-[1px]", b: true, w: 43 }, { t: "SmartTrack", c: "w-[67px] pl-[1px]", b: true, w: 79 }, { t: "Gumball", c: "w-[54px] pl-[1px]", b: true, w: 59 },
  { t: "Record History", c: "w-[84px] pl-[1px]", w: 97 }, { t: "Filter", c: "w-[34px] pl-[1px]", w: 32 },
];

const vpTabs: [string, number, number, number][] = [["Perspective", 95, 74, 13], ["Top", 58, 25, 26], ["Front", 57, 35, 15], ["Right", 57, 36, 14], ["+", 38, 0, 0]];

function Rhino() {
  return (
    <div className="flex h-[1078px] w-[960px] flex-col border border-b-0 border-[#dc3c72] bg-[#ebecf1] text-black">
      <div className="flex h-[37px] shrink-0 items-center bg-white pb-[1px] pl-[9px] pr-[24px]">
        <Svg w={20} h={20}><rect width="20" height="20" fill="#111" /><path d="M2 2l2 6 3-6 2 8 7 2-3 5-5 2-5-5 0-4z" fill="#eee" stroke="#999" strokeWidth=".8" /><path d="M5 8l3 4 5 1M6 14l4 3" stroke="#555" /><text x="12" y="9" fontSize="10" fontWeight="bold" fontFamily="Liberation Sans, sans-serif" fill="#ccc">6</text></Svg>
        <T w={509.500} className="-mt-[1px] ml-[5px] text-[14.600px]">a2-gauge.3dm (27 KB) - Rhinoceros 6 Evaluation (77 Days Remaining) - [Top]</T>
        <div className="ml-auto"><WinButtons color="#000" /></div>
      </div>
      <div className="flex h-[23px] shrink-0 items-center gap-[14px] bg-white pl-[7px]">
        {rhMenu.map(([t, u, w]) => (
          <T key={t} w={w} className="text-[14.600px]">{t.slice(0, u)}<span className="underline underline-offset-2">{t[u]}</span>{t.slice(u + 1)}</T>
        ))}
      </div>
      <div className="mt-[5px] flex h-[82px] shrink-0 pl-[4px] pr-[1px]">
        <div className="mr-[2px] w-[3px] border-x border-[#d0d4e0]" />
        <div className="flex flex-1 flex-col bg-white">
          <div className="flex h-[58px]">
            <div className="-mt-[2px] flex flex-1 flex-col pl-[1px] text-[14.600px] leading-5">
              <T w={346} className="self-start">Press Control to extrude, tap Alt to make a duplicate</T>
              <T w={178} className="self-start">1 curve added to selection.</T>
              <T w={178} className="self-start">1 curve added to selection.</T>
            </div>
            <div className="flex w-[20px] flex-col items-center justify-between bg-[#f0f0f0] py-[7px]">
              <Svg w={10} h={7}><path d="M.5 6L5 1.500 9.500 6" stroke="#606060" strokeWidth="2" /></Svg>
              <Svg w={10} h={7}><path d="M.5 1L5 5.500 9.500 1" stroke="#606060" strokeWidth="2" /></Svg>
            </div>
          </div>
          <div className="flex h-[24px] items-center border-t border-[#b9c2d8] pl-[1px] text-[14.600px] font-bold">
            <T w={76} className="-mt-[3px]">Command:</T>
            <div className="ml-[4px] h-[20px] w-[2px] self-start bg-black" />
            <div className="ml-auto mr-[1px] flex flex-col gap-[1px]">
              <div className="flex h-[10px] w-[18px] items-center justify-center border border-[#aaa] bg-[#f0f0f0]"><Svg w={8} h={4}><path d="M0 4h8L4 0z" fill="#000" /></Svg></div>
              <div className="flex h-[10px] w-[18px] items-center justify-center border border-[#aaa] bg-[#f0f0f0]"><Svg w={8} h={4}><path d="M0 0h8L4 4z" fill="#000" /></Svg></div>
            </div>
          </div>
        </div>
      </div>
      <div className="mt-[3px] h-px shrink-0 bg-[#d4d8e2]" />
      <div className="mt-[4px] flex h-[63px] shrink-0 pl-[4px] pr-[1px]">
        <div className="mr-[2px] w-[3px] border-x border-[#d0d4e0]" />
        <div className="min-w-0 flex-1">
          <div className="flex h-[24px] border-b border-[#c0c8dc]">
            {rhTabs.map(([t, w, tw], i) => {
              const active = t === "Viewport Layout";
              return (
                <div key={t} className={"relative flex h-[24px] shrink-0 items-center text-[14.600px] " + (i ? "-ml-[14px] pl-[27px] " : "overflow-hidden pl-[14px] ") + (i === 9 ? "overflow-hidden" : "")} style={{ width: w }}>
                  <svg width={w} height="25" viewBox={`0 0 ${w} 25`} className="absolute inset-0">
                    <path d={`M${i ? 1 : -8} 24L${i ? 19 : 7} 1.500Q${i ? 20 : 8} .5 ${i ? 22 : 10} .5H${i === 9 ? 110 : w - 4}Q${i === 9 ? 112 : w - 0.5} .5 ${i === 9 ? 112 : w - 0.5} 4V24`} fill={active ? "#ebecf1" : "#d6d6d6"} stroke="#bcc5dc" />
                  </svg>
                  <T w={tw} className="relative">{t}</T>
                </div>
              );
            })}
            <div className="flex flex-1 items-center border-l border-[#bcc5dc] bg-[#d6d6d6] pl-[2px]">
              <Svg w={9} h={8}><path d="M1 1l3 3-3 3M5 1l3 3-3 3" stroke="#111" strokeWidth="1.400" /></Svg>
              <Svg w={14} h={14} className="ml-[3px]"><circle cx="7" cy="7" r="5.800" stroke="#999" strokeWidth="2" strokeDasharray="2.200 1.400" /><circle cx="7" cy="7" r="4.600" stroke="#999" /><circle cx="7" cy="7" r="1.800" stroke="#999" /></Svg>
            </div>
          </div>
          <div className="flex h-[30px] items-center">
            {rhBar.map((n, i) => n === "|"
              ? <div key={i} className="flex w-[6px] justify-center"><div className="h-[24px] w-px bg-[#c4c4c8]" /></div>
              : <div key={i} className="-ml-px mr-px flex w-[28px] justify-center"><Svg w={22} h={22}>{n}</Svg></div>)}
          </div>
        </div>
      </div>
      <div className="flex h-[776px] shrink-0">
        <div className="h-full w-[65px] pl-[1px] pt-[3px]">
          <div className="ml-[2px] h-[3px] w-[54px] border-y border-[#c9cfe0]" />
          <div className="mt-[2px] grid w-[56px] grid-cols-2">
            {tools.map((n, i) => <Svg key={i} w={28} h={28}>{n}</Svg>)}
          </div>
        </div>
        <div className="relative">
          <div className="outline outline-[#bcc5dc]"><Viewport /></div>
          <div className="absolute left-0 top-0 flex h-[23px] w-[58px] items-center rounded-br bg-[#8ba5c3] pl-[8px] text-[14.600px] font-bold">
            <T w={28} className="-mt-[3px]">Top</T>
            <div className="ml-[8px] h-[20px] w-px bg-black" />
            <Svg w={9} h={5} className="-mt-[2px] ml-[2px]"><path d="M0 0h9L4.500 5z" fill="#000" /></Svg>
          </div>
        </div>
      </div>
      <div className="mt-[3px] flex h-[26px] shrink-0 pl-[65px] text-[14.600px]">
        {vpTabs.map(([t, w, tw, pl], i) => (
          <div key={t} className={"relative flex items-center pb-[2px] " + (i === 1 ? "z-10 -ml-[12px]" : "")} style={{ width: w, paddingLeft: pl }}>
            <svg width={w} height="26" viewBox={`0 0 ${w} 26`} className="absolute inset-0 overflow-visible">
              <path d={i === 1 ? `M0 0L20 23Q22 25.500 25 25.500H${w - 4}Q${w - 0.500} 25.500 ${w - 0.500} 22V0` : `M0 0V13L9 24Q10 25.500 13 25.500H${w - 4}Q${w - 0.500} 25.500 ${w - 0.500} 22V0`} fill={i === 1 || i === 4 ? "#ebecf1" : "#d6d6d6"} stroke="#bcc5dc" />
            </svg>
            {t === "+" ? <Svg w={12} h={12} className="relative ml-[16px] mt-[2px]"><path d="M4.500 .5h2v4h4v2h-4v4h-2v-4h-4v-2h4z" fill="#fff" stroke="#777" /></Svg> : <T w={tw} className="relative">{t}</T>}
          </div>
        ))}
      </div>
      <div className="mt-[6px] flex h-[28px] shrink-0 items-center pl-[4px] text-[14.600px]">
        <div className="mr-[5px] h-[22px] w-[3px] border-x border-[#d0d4e0]" />
        {osnaps.map(([t, w, tw], i) => (
          <div key={t} className="flex shrink-0 items-center" style={{ width: w }}>
            {i > 10
              ? <div className="mr-[5px] h-[14px] w-[14px] border border-[#b4b4b4] bg-[#e0e0e0]" />
              : <div className="mr-[5px] flex h-[16px] w-[16px] items-center justify-center border border-[#222] bg-white">{i === 1 && <Svg w={12} h={10}><path d="M1 5l3.500 3.500L11 1" stroke="#333" strokeWidth="1.300" /></Svg>}</div>}
            <T w={tw}>{t}</T>
          </div>
        ))}
      </div>
      <div className="flex min-h-0 flex-1 border-t border-[#c0c8dc] text-[14.600px]">
        {status.map((s) => (
          <div key={s.t} className={"flex h-full shrink-0 items-center overflow-hidden border-r border-[#c0c8dc] pt-[1px] " + s.c + (s.b ? " bg-[#e1f1fc] font-bold" : "")}>
            {s.t === "Default" && <div className="mr-[4px] h-[14px] w-[14px] shrink-0 bg-black" />}
            <T w={s.w} className="shrink-0">{s.t}</T>
          </div>
        ))}
      </div>
    </div>
  );
}

export default function App() {
  return (
    <div className="h-[1080px] w-[1920px] overflow-hidden bg-[#121212] font-['Open_Sans','Noto_Sans',sans-serif] leading-5">
      <Defs />
      <div className="flex">
        <Grasshopper />
        <Rhino />
      </div>
      <div className="h-[2px] bg-[#121212]" />
    </div>
  );
}
